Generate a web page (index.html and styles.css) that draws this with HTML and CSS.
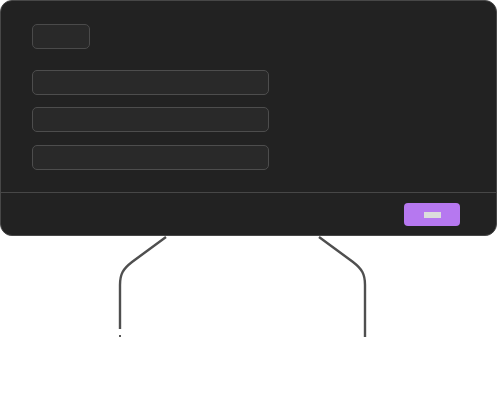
FILE: index.html
```html
<!DOCTYPE html>
<html>
<head>
<meta charset="utf-8">
<link rel="stylesheet" href="styles.css">
</head>
<body>
<div class="dialog">
  <div class="dialog-body">
    <div class="chip"></div>
    <div class="fields">
      <div class="field"></div>
      <div class="field"></div>
      <div class="field"></div>
    </div>
  </div>
  <div class="dialog-footer">
    <button class="btn"><span class="btn-label"></span></button>
  </div>
</div>
<svg class="wires" width="497" height="178" viewBox="0 235 497 178">
  <path d="M166 236 L132 261 C123 268 120 273 120 284 L120 328" />
  <path d="M319 236 L353 261 C362 268 365 273 365 284 L365 336" />
  <rect class="dot" x="119" y="334" width="2" height="2" />
</svg>
</body>
</html>
```
FILE: styles.css
```css
html, body {
  margin: 0;
  padding: 0;
  background: #ffffff;
  font-family: "Liberation Sans", Arial, sans-serif;
}
.dialog {
  box-sizing: border-box;
  width: 497px;
  height: 236px;
  background: #222222;
  border: 1px solid #474747;
  border-radius: 12px;
  display: flex;
  flex-direction: column;
  overflow: hidden;
}
.dialog-body {
  padding: 23px 30px 22px 31px;
  display: flex;
  flex-direction: column;
  gap: 21px;
}
.chip {
  box-sizing: border-box;
  width: 58px;
  height: 25px;
  background: #292929;
  border: 1px solid #4a4a4a;
  border-radius: 5px;
}
.fields {
  display: flex;
  flex-direction: column;
  gap: 12px;
}
.field {
  box-sizing: border-box;
  width: 237px;
  height: 25px;
  background: #292929;
  border: 1px solid #4d4d4d;
  border-radius: 5px;
}
.fields .field:nth-child(3) { margin-top: 1px; }
.dialog-footer {
  flex: 1;
  border-top: 1px solid #474747;
  display: flex;
  justify-content: flex-end;
  align-items: flex-start;
  padding: 10px 36px 0 0;
}
.btn {
  width: 56px;
  height: 23px;
  background: #b678f0;
  border: none;
  border-radius: 4px;
  padding: 0;
  display: flex;
  align-items: center;
  justify-content: center;
}
.btn-label {
  display: block;
  width: 17px;
  height: 6px;
  background: #dcdcdc;
}
.wires {
  display: block;
}
.wires path {
  fill: none;
  stroke: #4f4f4f;
  stroke-width: 2.4;
}
.wires .dot {
  fill: #555555;
}
```
